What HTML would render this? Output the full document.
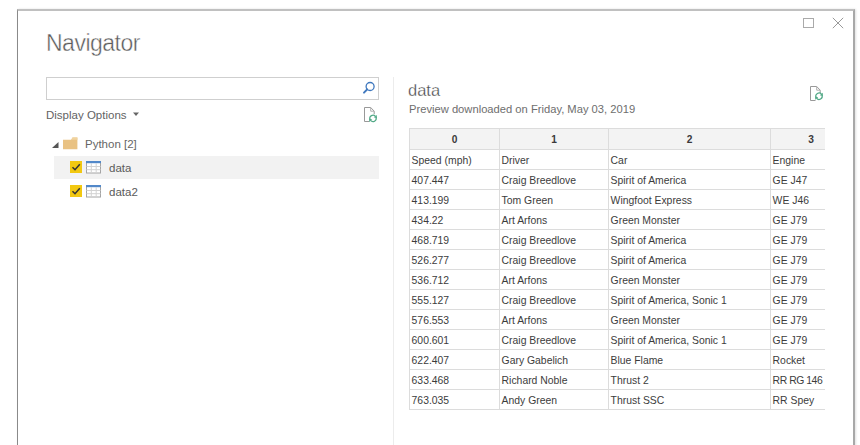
<!DOCTYPE html>
<html><head><meta charset="utf-8">
<style>
*{margin:0;padding:0;box-sizing:border-box}
html,body{width:860px;height:445px;overflow:hidden;background:#fff}
body{position:relative;font-family:"Liberation Sans",sans-serif;color:#444}
.a{position:absolute;white-space:nowrap}
#dlg{position:absolute;left:17px;top:9px;width:838px;box-shadow:1px 0 2px rgba(0,0,0,0.12);height:460px;border-left:1px solid #8a8a8a;border-top:2px solid #c0c0c0;border-right:2px solid #a8a8a8}
#title{left:46px;top:30px;font-size:23px;line-height:26px;letter-spacing:-0.5px;color:#5a5a5a;-webkit-text-stroke:0.45px #fff}
#search{left:46px;top:77px;width:333px;height:23px;border:1.5px solid #cfcfcf}
#dispopt{left:46px;top:107px;font-size:11.5px;line-height:16px;color:#636363}
#vdiv{left:393px;top:77px;width:1px;height:380px;background:#ececec}
#selrow{left:54px;top:156px;width:325px;height:23px;background:#f2f2f2}
.tree{font-size:11.5px;line-height:16px;color:#5a5a5a}
.cb{position:absolute;width:12px;height:12px;background:#f2c811}
#tbl{position:absolute;left:409px;top:128px;width:416px;height:282px;overflow:hidden}
table{border-collapse:collapse;table-layout:fixed;width:442px;font-size:10.4px;color:#3c3c3c}
td,th{border:1px solid #dcdcdc;height:20px;line-height:17px;vertical-align:top;padding:2px 0 0 1.6px;white-space:nowrap;overflow:hidden;text-align:left;font-weight:normal}
th{background:#f3f3f3;text-align:center;font-weight:bold;height:21px;color:#3a3a3a;font-size:10.2px;padding:2px 0 0 0}
</style></head><body>
<div id="dlg"></div>
<div class="a" id="title">Navigator</div>
<div class="a" id="search"></div>
<svg class="a" style="left:362px;top:80px" width="15" height="15" viewBox="0 0 15 15"><circle cx="8.1" cy="6.5" r="4" fill="none" stroke="#3f78be" stroke-width="1.3"/><line x1="5.2" y1="9.4" x2="2" y2="12.6" stroke="#3f78be" stroke-width="2" stroke-linecap="round"/></svg>
<div class="a" id="dispopt">Display Options</div>
<svg class="a" style="left:133px;top:112px" width="6" height="4" viewBox="0 0 6 4"><path d="M0 0.5H6L3 4z" fill="#666"/></svg>
<!-- refresh doc icon left -->
<svg class="a" style="left:363px;top:106px" width="17" height="18" viewBox="0 0 17 18"><path d="M6.5 15.5H1.5V1.5H7.7L11.2 5.2V8" fill="none" stroke="#999" stroke-width="1"/><path d="M7.7 1.5V5.2H11.2" fill="none" stroke="#b0b0b0" stroke-width="1"/><path d="M6.99 13.49A3.2 3.2 0 0 1 12.45 10.34M13.01 11.31A3.2 3.2 0 0 1 7.55 14.46" fill="none" stroke="#52a987" stroke-width="1.2"/><path d="M13.99 12.18L10.80 11.33L13.71 8.89zM6.01 12.62L9.20 13.47L6.29 15.91z" fill="#52a987"/></svg>
<div class="a" id="vdiv"></div>
<!-- tree -->
<svg class="a" style="left:52px;top:142px" width="7" height="6" viewBox="0 0 7 6"><path d="M6.5 0V6H0z" fill="#555"/></svg>
<svg class="a" style="left:63px;top:137px" width="15" height="13" viewBox="0 0 15 13"><path d="M0 2.7H8.2L9.5 0.6H14.4V12.3H0z" fill="#e9c283"/><path d="M9.5 0.6H14.4V2.7H8.2z" fill="#f0d39f"/></svg>
<div class="a tree" style="left:85px;top:136px;color:#666">Python [2]</div>
<div class="a" id="selrow"></div>
<div class="cb" style="left:70px;top:161px"></div>
<svg class="a" style="left:70px;top:161px" width="12" height="12" viewBox="0 0 12 12"><path d="M2.5 6.2L5 8.7L9.8 3.2" fill="none" stroke="#333" stroke-width="1.5"/></svg>
<svg class="a" style="left:86px;top:161px" width="15" height="13" viewBox="0 0 15 13"><rect x="0.5" y="0.5" width="14" height="11.5" fill="#fff" stroke="#a4a4a4" stroke-width="1"/><path d="M0.5 5.5H14.5M0.5 8.7H14.5M5.3 2.5V11.5M10.2 2.5V11.5" stroke="#d2d2d2" stroke-width="1"/><rect x="0" y="0" width="15" height="2.2" fill="#5288c9"/></svg>
<div class="a tree" style="left:109px;top:160px">data</div>
<div class="cb" style="left:70px;top:185px"></div>
<svg class="a" style="left:70px;top:185px" width="12" height="12" viewBox="0 0 12 12"><path d="M2.5 6.2L5 8.7L9.8 3.2" fill="none" stroke="#333" stroke-width="1.5"/></svg>
<svg class="a" style="left:86px;top:185px" width="15" height="13" viewBox="0 0 15 13"><rect x="0.5" y="0.5" width="14" height="11.5" fill="#fff" stroke="#a4a4a4" stroke-width="1"/><path d="M0.5 5.5H14.5M0.5 8.7H14.5M5.3 2.5V11.5M10.2 2.5V11.5" stroke="#d2d2d2" stroke-width="1"/><rect x="0" y="0" width="15" height="2.2" fill="#5288c9"/></svg>
<div class="a tree" style="left:109px;top:184px">data2</div>
<!-- max / close -->
<div class="a" style="left:803px;top:18px;width:11px;height:10px;border:1px solid #aaa"></div>
<svg class="a" style="left:832px;top:17px" width="12" height="12" viewBox="0 0 12 12"><path d="M0.8 0.8L11.2 11.2M11.2 0.8L0.8 11.2" stroke="#999" stroke-width="1"/></svg>
<!-- right panel -->
<div class="a" style="left:408px;top:80px;font-size:16.5px;line-height:20px;color:#444;-webkit-text-stroke:0.3px #fff">data</div>
<div class="a" style="left:409px;top:102px;font-size:11.2px;line-height:14px;color:#6e6e6e">Preview downloaded on Friday, May 03, 2019</div>
<svg class="a" style="left:809px;top:85px" width="17" height="18" viewBox="0 0 17 18"><path d="M6.5 15.5H1.5V1.5H7.7L11.2 5.2V8" fill="none" stroke="#999" stroke-width="1"/><path d="M7.7 1.5V5.2H11.2" fill="none" stroke="#b0b0b0" stroke-width="1"/><g transform="translate(0,-1.2)"><path d="M6.99 13.49A3.2 3.2 0 0 1 12.45 10.34M13.01 11.31A3.2 3.2 0 0 1 7.55 14.46" fill="none" stroke="#52a987" stroke-width="1.2"/><path d="M13.99 12.18L10.80 11.33L13.71 8.89zM6.01 12.62L9.20 13.47L6.29 15.91z" fill="#52a987"/></g></svg>
<div id="tbl"><table>
<colgroup><col style="width:90px"><col style="width:109px"><col style="width:162px"><col style="width:81px"></colgroup>
<tr><th>0</th><th>1</th><th>2</th><th>3</th></tr>
<tr><td>Speed (mph)</td><td>Driver</td><td>Car</td><td>Engine</td></tr>
<tr><td>407.447</td><td>Craig Breedlove</td><td>Spirit of America</td><td>GE J47</td></tr>
<tr><td>413.199</td><td>Tom Green</td><td>Wingfoot Express</td><td>WE J46</td></tr>
<tr><td>434.22</td><td>Art Arfons</td><td>Green Monster</td><td>GE J79</td></tr>
<tr><td>468.719</td><td>Craig Breedlove</td><td>Spirit of America</td><td>GE J79</td></tr>
<tr><td>526.277</td><td>Craig Breedlove</td><td>Spirit of America</td><td>GE J79</td></tr>
<tr><td>536.712</td><td>Art Arfons</td><td>Green Monster</td><td>GE J79</td></tr>
<tr><td>555.127</td><td>Craig Breedlove</td><td>Spirit of America, Sonic 1</td><td>GE J79</td></tr>
<tr><td>576.553</td><td>Art Arfons</td><td>Green Monster</td><td>GE J79</td></tr>
<tr><td>600.601</td><td>Craig Breedlove</td><td>Spirit of America, Sonic 1</td><td>GE J79</td></tr>
<tr><td>622.407</td><td>Gary Gabelich</td><td>Blue Flame</td><td>Rocket</td></tr>
<tr><td>633.468</td><td>Richard Noble</td><td>Thrust 2</td><td style="letter-spacing:-0.45px">RR RG 146</td></tr>
<tr><td>763.035</td><td>Andy Green</td><td>Thrust SSC</td><td>RR Spey</td></tr>
</table></div>
</body></html>
